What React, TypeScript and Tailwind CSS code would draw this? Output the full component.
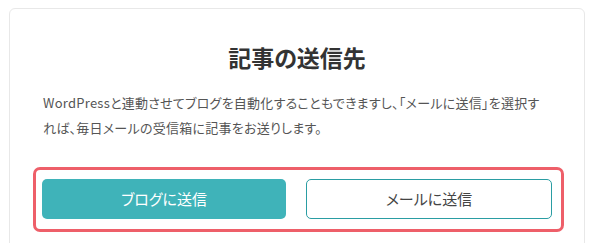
export default function App() {
  return (
    <div className="min-h-[243px] bg-white pt-[8px] font-['Noto_Sans_CJK_JP','Noto_Sans',sans-serif] [font-feature-settings:'palt']">
      <div className="ml-[9px] w-[576px] rounded-[6px] border border-[#e8e8e8] px-[33px] pt-[32px] pb-[40px]">
        <h2 className="text-center text-[23px] leading-[32px] font-bold text-[#333]">
          記事の送信先
        </h2>

        <p className="mt-[17px] text-[13px] leading-[25px] tracking-[0.25px] text-[#555]">
          WordPressと連動させてブログを自動化することもできますし、「メールに送信」を選択すれば、毎日メールの受信箱に記事をお送りします。
        </p>

        {/* 送信ボタン（強調枠） */}
        <div className="mt-[27px] -ml-[10px] -mr-[13px] rounded-[7px] border-[3px] border-[#ee5f69] pt-[9px] pb-[10px] pl-[6px] pr-[9px]">
          <div className="flex gap-[20px]">
            <button className="flex h-[40px] flex-1 items-center justify-center rounded-[5px] bg-[#3fb3b9] text-[15px] text-white">
              ブログに送信
            </button>
            <button className="flex h-[40px] flex-1 items-center justify-center rounded-[5px] border border-[#2a9da3] bg-white text-[15px] text-[#444]">
              メールに送信
            </button>
          </div>
        </div>
      </div>
    </div>
  );
}
